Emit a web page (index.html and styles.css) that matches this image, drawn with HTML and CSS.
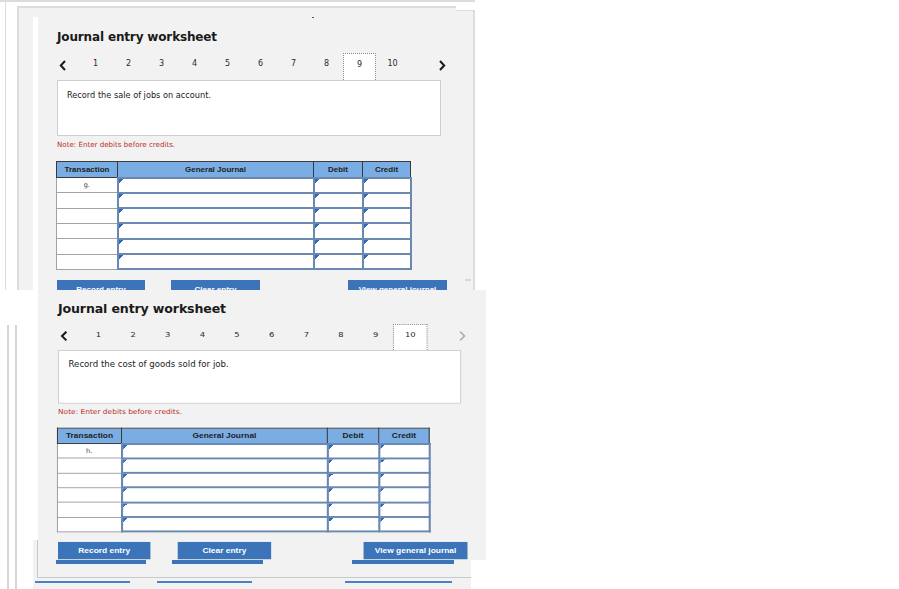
FILE: index.html
```html
<!DOCTYPE html>
<html>
<head>
    <meta charset="UTF-8">
    <meta name="viewport" content="width=device-width, initial-scale=1.0">
    <title>Journal entry worksheet</title>
    <link rel="stylesheet" href="styles.css">
</head>
<body>
    <div class="desk">
        <!-- lowest capture: only its bottom edge shows -->
        <section class="shot shot-c">
            <div class="rail"></div>
            <div class="rail"></div>
            <div class="under">
                <div class="under-box">
                    <span class="stub stub-1"></span>
                    <span class="stub stub-2"></span>
                    <span class="stub stub-3"></span>
                </div>
                <div class="under-lines">
                    <span class="line-1"></span>
                    <span class="line-2"></span>
                    <span class="line-3"></span>
                </div>
            </div>
        </section>

        <!-- first capture: entry g -->
        <section class="shot shot-a">
            <div class="outer">
                <div class="panel">
                    <span class="speck"></span>
                    <span class="dash"></span>
                    <div class="inner">
                        <div class="sheet">
                            <h2 class="sheet-title">Journal entry worksheet</h2>
                            <div class="pager">
                                <span class="pager-prev"><svg width="8" height="11" viewBox="0 0 8 11"><polyline points="6,1 1.8,5.5 6,10" /></svg></span>
                                <span class="pager-num">1</span>
                                <span class="pager-num">2</span>
                                <span class="pager-num">3</span>
                                <span class="pager-num">4</span>
                                <span class="pager-num">5</span>
                                <span class="pager-num">6</span>
                                <span class="pager-num">7</span>
                                <span class="pager-num">8</span>
                                <span class="pager-num is-current">9</span>
                                <span class="pager-num">10</span>
                                <span class="pager-next"><svg width="8" height="11" viewBox="0 0 8 11"><polyline points="2,1 6.2,5.5 2,10" /></svg></span>
                            </div>
                            <div class="prompt">Record the sale of jobs on account.</div>
                            <p class="note">Note: Enter debits before credits.</p>
                            <table class="journal">
                                <colgroup>
                                    <col class="c-tr"><col class="c-gj"><col class="c-dr"><col class="c-cr">
                                </colgroup>
                                <tr><th>Transaction</th><th>General Journal</th><th>Debit</th><th>Credit</th></tr>
                                <tr><td class="tr">g.</td><td class="in"></td><td class="in"></td><td class="in"></td></tr>
                                <tr><td class="tr"></td><td class="in"></td><td class="in"></td><td class="in"></td></tr>
                                <tr><td class="tr"></td><td class="in"></td><td class="in"></td><td class="in"></td></tr>
                                <tr><td class="tr"></td><td class="in"></td><td class="in"></td><td class="in"></td></tr>
                                <tr><td class="tr"></td><td class="in"></td><td class="in"></td><td class="in"></td></tr>
                                <tr><td class="tr"></td><td class="in"></td><td class="in"></td><td class="in"></td></tr>
                            </table>
                            <div class="actions">
                                <button class="btn btn-record">Record entry</button>
                                <button class="btn btn-clear">Clear entry</button>
                                <button class="btn btn-view">View general journal</button>
                            </div>
                        </div>
                    </div>
                </div>
            </div>
        </section>

        <!-- second capture: entry h, pasted a little wider -->
        <section class="shot shot-b">
            <div class="gutter"></div>
            <div class="panel-b">
                <div class="sheet sheet-wide">
                    <h2 class="sheet-title">Journal entry worksheet</h2>
                    <div class="pager">
                        <span class="pager-prev"><svg width="8" height="11" viewBox="0 0 8 11"><polyline points="6,1 1.8,5.5 6,10" /></svg></span>
                        <span class="pager-num">1</span>
                        <span class="pager-num">2</span>
                        <span class="pager-num">3</span>
                        <span class="pager-num">4</span>
                        <span class="pager-num">5</span>
                        <span class="pager-num">6</span>
                        <span class="pager-num">7</span>
                        <span class="pager-num">8</span>
                        <span class="pager-num">9</span>
                        <span class="pager-num is-current">10</span>
                        <span class="pager-next is-off"><svg width="8" height="11" viewBox="0 0 8 11"><polyline points="2,1 6.2,5.5 2,10" /></svg></span>
                    </div>
                    <div class="prompt">Record the cost of goods sold for job.</div>
                    <p class="note">Note: Enter debits before credits.</p>
                    <table class="journal">
                        <colgroup>
                            <col class="c-tr"><col class="c-gj"><col class="c-dr"><col class="c-cr">
                        </colgroup>
                        <tr><th>Transaction</th><th>General Journal</th><th>Debit</th><th>Credit</th></tr>
                        <tr><td class="tr">h.</td><td class="in"></td><td class="in"></td><td class="in"></td></tr>
                        <tr><td class="tr"></td><td class="in"></td><td class="in"></td><td class="in"></td></tr>
                        <tr><td class="tr"></td><td class="in"></td><td class="in"></td><td class="in"></td></tr>
                        <tr><td class="tr"></td><td class="in"></td><td class="in"></td><td class="in"></td></tr>
                        <tr><td class="tr"></td><td class="in"></td><td class="in"></td><td class="in"></td></tr>
                        <tr><td class="tr"></td><td class="in"></td><td class="in"></td><td class="in"></td></tr>
                    </table>
                    <div class="actions">
                        <button class="btn btn-record">Record entry</button>
                        <button class="btn btn-clear">Clear entry</button>
                        <button class="btn btn-view">View general journal</button>
                    </div>
                </div>
            </div>
        </section>
    </div>
</body>
</html>
```

FILE: styles.css
```css
:root {
    --panel-bg: #f2f2f2;
    --edge: #dcdcdc;
    --head-blue: #7aade3;
    --btn-blue: #3b74b9;
    --cell-blue: #6a88b0;
    --note-red: #b8312b;
    --ink: #222;
}
body {
    margin: 0;
    background: #fff;
    font-family: "DejaVu Sans", Verdana, sans-serif;
    color: var(--ink);
}
.desk {
    position: relative;
    width: 899px;
    height: 589px;
    overflow: hidden;
}
.shot {
    position: absolute;
    left: 0;
    box-sizing: border-box;
}

/* ---------- capture A ---------- */
.shot-a {
    top: 0;
    width: 475px;
    height: 290px;
    overflow: hidden;
    border-top: 2px solid var(--edge);
}
.outer {
    height: 100%;
    margin-left: 5px;
    padding: 4px 0 0 11px;
    border-left: 1px solid var(--edge);
    box-sizing: border-box;
}
.panel {
    position: relative;
    height: 100%;
    background: var(--panel-bg);
    border: 2px solid var(--edge);
    border-bottom: 0;
    box-sizing: border-box;
}
.panel::after {
    content: "";
    position: absolute;
    top: -2px;
    right: -2px;
    width: 19px;
    height: 4px;
    background: #fff;
    border-bottom: 1px solid var(--edge);
}
.speck {
    position: absolute;
    left: 293px;
    top: 9px;
    width: 2px;
    height: 1px;
    background: #555;
}
.dash {
    position: absolute;
    left: 446px;
    top: 271px;
    width: 6px;
    height: 2px;
    background: #d6d6d6;
}
.inner {
    height: 100%;
    margin: 9px 0 0 14px;
    padding: 11px 0 0 19px;
    border-left: 5px solid #fff;
}

/* ---------- capture B ---------- */
.shot-b {
    top: 290px;
    width: 486px;
    height: 270px;
    display: flex;
    align-items: flex-start;
}
.gutter {
    width: 38px;
    height: 35px;
    background: #fff;
}
.panel-b {
    flex: 1;
    height: 100%;
    background: var(--panel-bg);
    padding: 10px 0 0 20px;
    box-sizing: border-box;
}
.sheet-wide {
    transform: scale(1.05, 0.96);
    transform-origin: 0 0;
}

/* ---------- capture C (underneath) ---------- */
.shot-c {
    top: 290px;
    width: 486px;
    height: 299px;
    display: flex;
    padding-top: 35px;
}
.rail {
    width: 2px;
    margin-left: 7px;
    background: #d6d6d6;
}
.rail + .rail {
    margin-left: 6px;
}
.under {
    align-self: flex-end;
    width: 438px;
    height: 49px;
    margin-left: 16px;
    padding-left: 4px;
    background: var(--panel-bg);
    box-sizing: border-box;
}
.under-box {
    display: flex;
    height: 38px;
    padding-top: 19px;
    border-left: 1px solid #c9c9c9;
    border-bottom: 1px solid #c9c9c9;
    box-sizing: border-box;
}
.stub {
    height: 5px;
    background: var(--btn-blue);
}
.stub-1 { width: 90px; margin-left: 18px; }
.stub-2 { width: 91px; margin-left: 26px; }
.stub-3 { width: 102px; margin-left: 89px; }
.under-lines {
    display: flex;
    margin: 3px 0 0 -4px;
}
.under-lines span {
    height: 2px;
    background: #4a80c4;
}
.line-1 { width: 95px; margin-left: 2px; }
.line-2 { width: 95px; margin-left: 27px; }
.line-3 { width: 107px; margin-left: 93px; }

/* ---------- worksheet ---------- */
.sheet {
    width: 392px;
}
.sheet-title {
    margin: 1px 0 8px;
    font-size: 12px;
    line-height: 16px;
    letter-spacing: -0.15px;
    font-weight: bold;
    color: #1a1a1a;
}
.pager {
    display: flex;
    height: 27px;
    font-size: 8px;
    line-height: 21px;
}
.pager-prev {
    width: 22px;
    padding: 5px 0 0 2px;
    box-sizing: border-box;
}
.pager-next {
    width: 16px;
    margin-left: auto;
    padding: 5px 0 0 5px;
    box-sizing: border-box;
}
.pager svg polyline {
    fill: none;
    stroke: #1a1a1a;
    stroke-width: 2;
}
.pager-next.is-off svg polyline {
    stroke: #a8a8a8;
    stroke-width: 1.5;
}
.pager-num {
    width: 33px;
    text-align: center;
    color: #2a2a2a;
}
.pager-num.is-current {
    background: #fff;
    border: 1px dotted #7d8896;
    border-bottom: 0;
    box-sizing: border-box;
}
.prompt {
    width: 384px;
    height: 56px;
    padding: 9px 9px;
    background: #fff;
    border: 1px solid #cfcfcf;
    box-sizing: border-box;
    font-size: 8.2px;
    line-height: 10px;
    color: #222;
}
.note {
    margin: 4px 0 11px;
    font-size: 7.1px;
    line-height: 10px;
    color: var(--note-red);
}
.journal {
    width: 354px;
    margin-left: -1px;
    border-collapse: collapse;
    table-layout: fixed;
}
.c-tr { width: 61px; }
.c-gj { width: 196px; }
.c-dr { width: 49px; }
.c-cr { width: 48px; }
.journal th {
    height: 16px;
    padding: 0;
    background: var(--head-blue);
    border: 1px solid #3a3a3a;
    font-family: "Liberation Sans", Arial, sans-serif;
    font-size: 8px;
    font-weight: bold;
    color: #222;
    box-sizing: border-box;
}
.journal td {
    height: 15.33px;
    padding: 0;
    background: #fff;
    box-sizing: border-box;
}
.journal td.tr {
    border: 1px solid #a3a3a3;
    text-align: center;
    vertical-align: middle;
    font-size: 6.5px;
    line-height: 9px;
    color: #3a3a3a;
}
.journal td.in {
    border: 2px solid var(--cell-blue);
    background: linear-gradient(135deg, #2d6cc0 3px, transparent 3px) no-repeat #fff;
}
.actions {
    display: flex;
    margin-top: 10px;
}
.btn {
    height: 18px;
    padding: 0;
    border: 0;
    background: var(--btn-blue);
    color: #fff;
    font-family: "Liberation Sans", Arial, sans-serif;
    font-size: 8px;
    font-weight: bold;
}
.btn-record { width: 88px; }
.btn-clear { width: 89px; margin-left: 26px; }
.btn-view { width: 99px; margin-left: 88px; }
```
